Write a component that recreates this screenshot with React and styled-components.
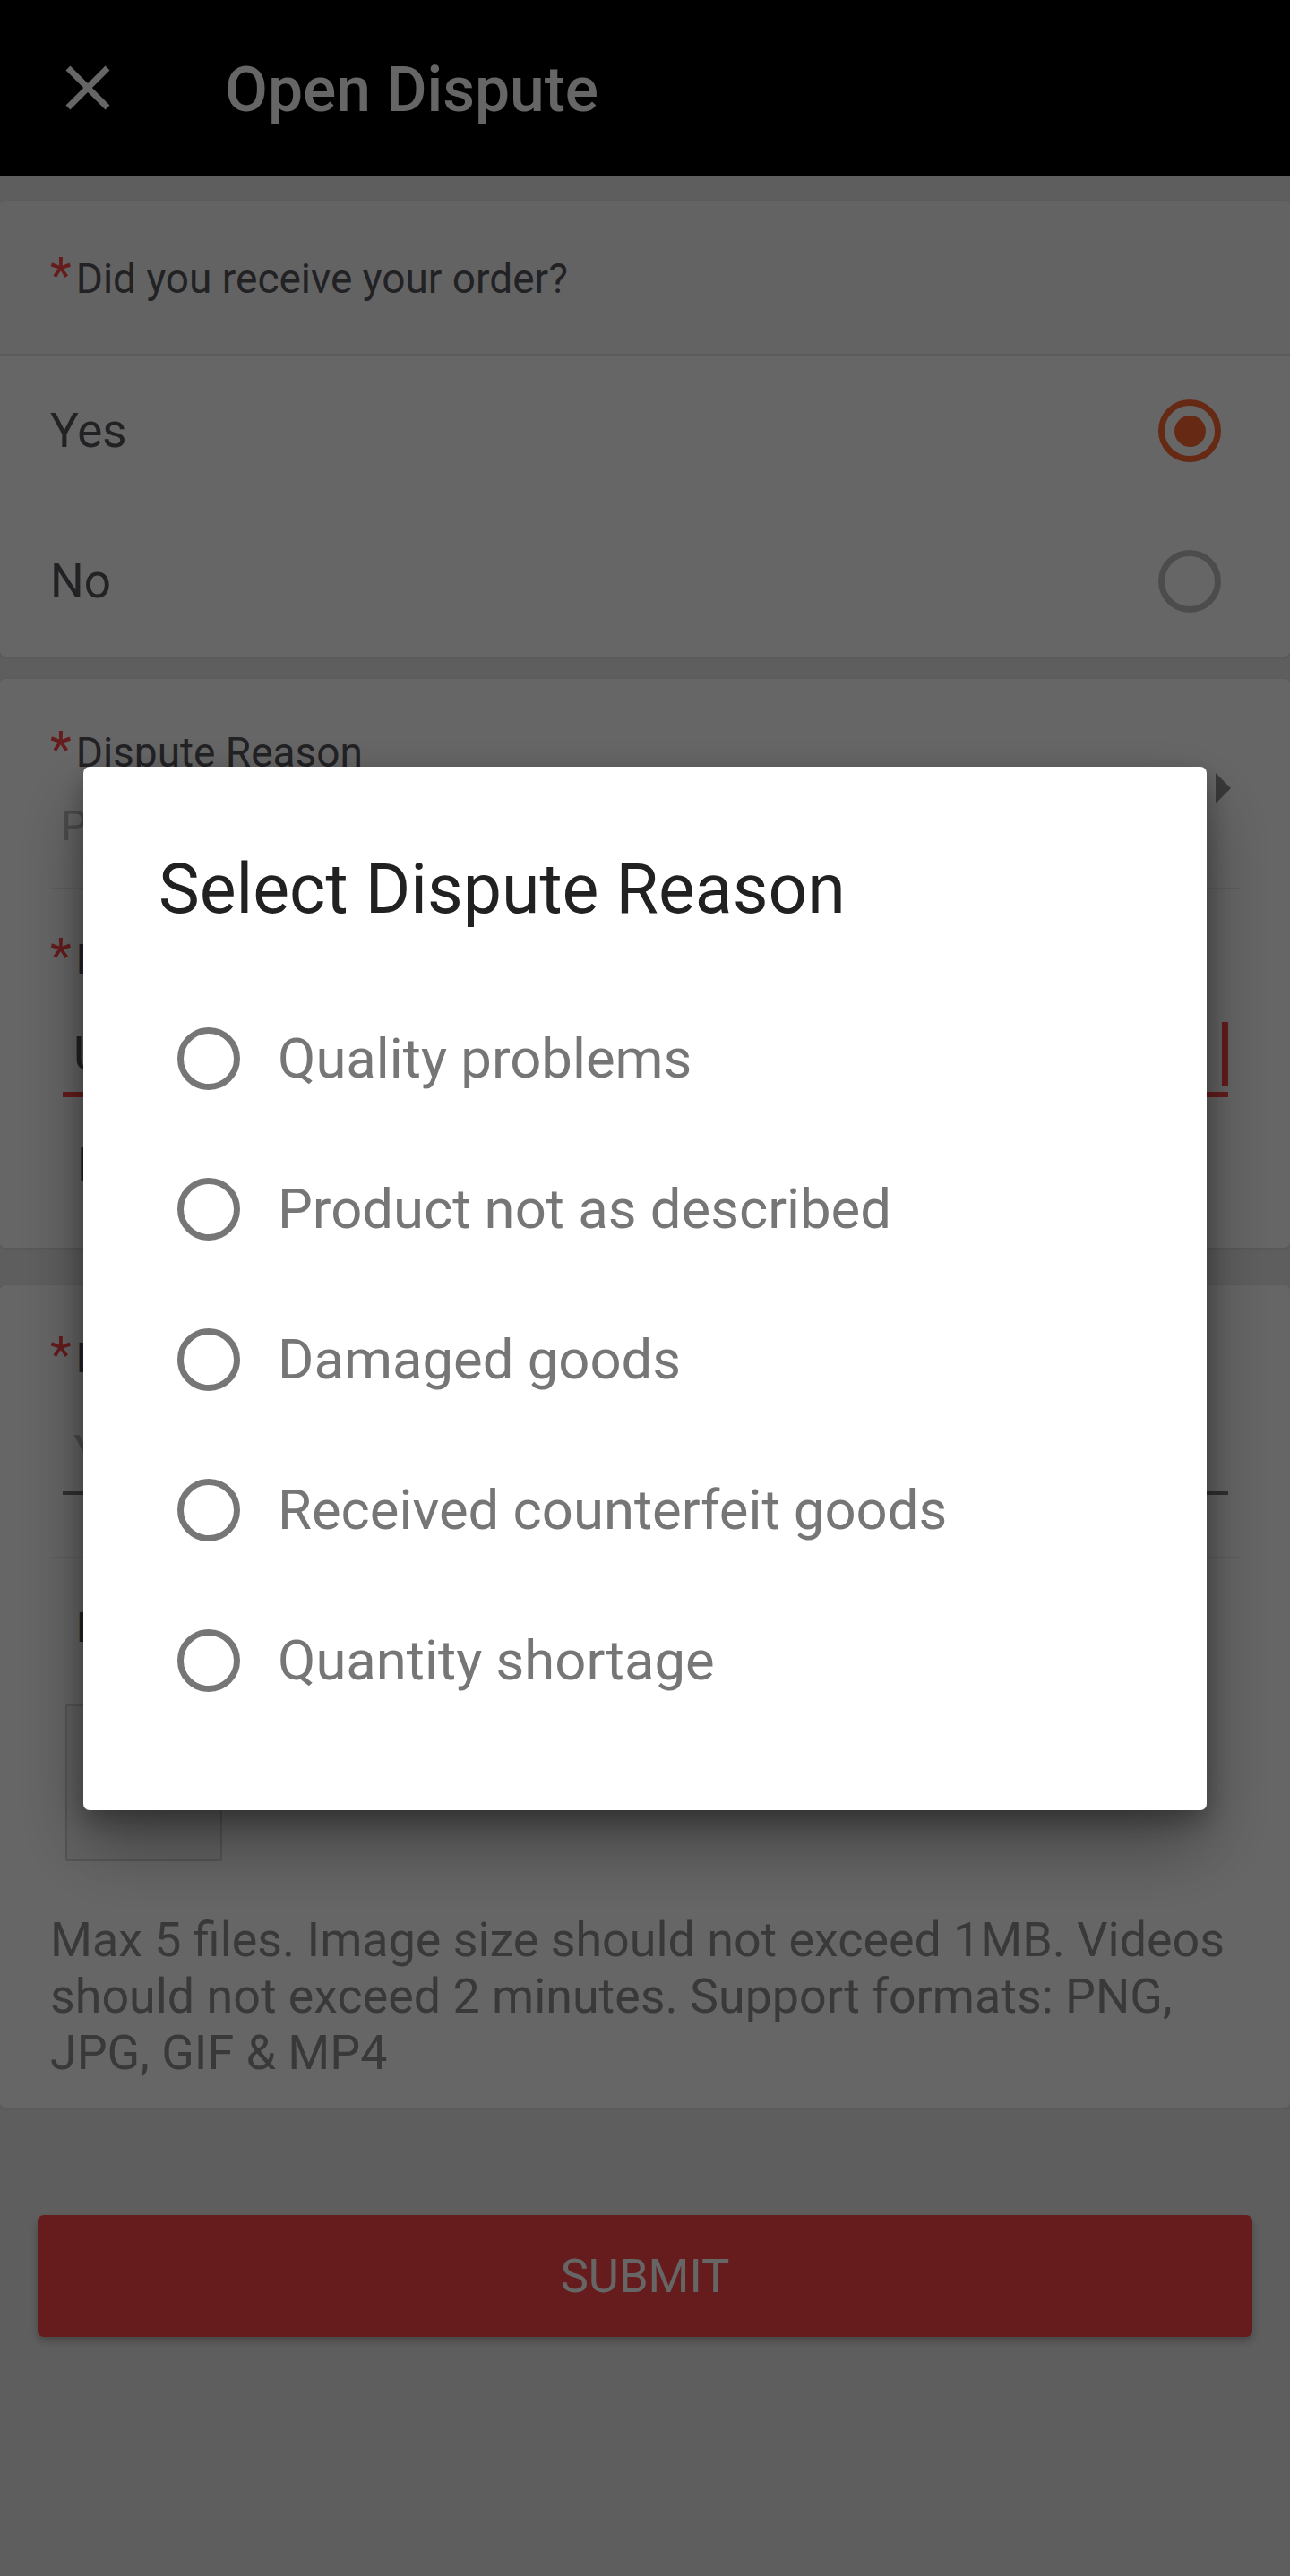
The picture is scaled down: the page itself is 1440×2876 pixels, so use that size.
import React from 'react';
import styled, { createGlobalStyle } from 'styled-components';

const GlobalStyle = createGlobalStyle`
  html, body { margin: 0; padding: 0; }
  body {
    background: #ececec;
    font-family: Roboto, "Noto Sans", "Liberation Sans", sans-serif;
  }
  * { box-sizing: border-box; }
`;

const Page = styled.div`
  min-height: 100vh;
  background: #ececec;
  font-family: Roboto, "Noto Sans", "Liberation Sans", sans-serif;
  padding-bottom: 200px;
`;

const Toolbar = styled.header`
  height: 196px;
  background: #000;
  display: flex;
  align-items: center;
  padding-left: 56px;
`;

const IconButton = styled.div`
  width: 84px;
  height: 84px;
  display: flex;
  align-items: center;
  justify-content: center;
  color: #fff;
`;

const ToolbarTitle = styled.h1`
  margin: 6px 0 0 111px;
  font-size: 69.5px;
  font-weight: 500;
  line-height: 1;
  color: #fff;
`;

const Content = styled.main`
  display: flex;
  flex-direction: column;
`;

const Card = styled.section`
  background: #fff;
  border-radius: 6px;
  box-shadow: 0 1px 4px rgba(0, 0, 0, 0.12);
  margin-top: ${(p) => p.$gap}px;
  padding-bottom: ${(p) => p.$pb || 0}px;
`;

const QuestionHeader = styled.div`
  height: 173px;
  display: flex;
  align-items: center;
  padding: 0 56px;
  background: #f8f8f8;
  border-bottom: 2px solid #e4e4e4;
  border-radius: 6px 6px 0 0;
`;

const Label = styled.div`
  font-size: 46px;
  line-height: 56px;
  color: #55555c;
  padding-left: ${(p) => (p.$required ? 0 : 29)}px;
  white-space: nowrap;
`;

const Asterisk = styled.span`
  color: #ff4747;
  font-size: 55px;
  margin-right: 5px;
`;

const ChoiceRow = styled.div`
  height: 168px;
  display: flex;
  align-items: center;
  justify-content: space-between;
  padding: 0 77px 0 56px;
  font-size: 53px;
  color: #55555c;
`;

const Radio = styled.span`
  width: 70px;
  height: 70px;
  border-radius: 50%;
  border: 7px solid ${(p) => (p.$checked ? '#ff6a33' : '#bdbdbd')};
  display: flex;
  align-items: center;
  justify-content: center;
  flex-shrink: 0;
  &::after {
    content: '';
    width: 35px;
    height: 35px;
    border-radius: 50%;
    background: #ff6a33;
    display: ${(p) => (p.$checked ? 'block' : 'none')};
  }
`;

const Field = styled.div`
  margin: 0 56px;
  padding-top: ${(p) => p.$pt}px;
  padding-bottom: ${(p) => p.$pb || 0}px;
  border-bottom: ${(p) => (p.$divider ? '2px solid #ebebeb' : 'none')};
`;

const SelectRow = styled.div`
  display: flex;
  align-items: center;
`;

const SelectBody = styled.div`
  flex: 1;
  display: flex;
  flex-direction: column;
`;

const SelectValue = styled.div`
  margin-top: 26px;
  padding-left: 12px;
  font-size: 46px;
  line-height: 56px;
  color: #bfbfbf;
`;

const ArrowIcon = styled.svg`
  width: 17px;
  height: 34px;
  margin-right: 10px;
  flex-shrink: 0;
`;

const InputRow = styled.div`
  margin: ${(p) => p.$mt}px 13px 0 14px;
  height: ${(p) => 78 + p.$line}px;
  padding-bottom: 6px;
  border-bottom: ${(p) => p.$line}px solid ${(p) => p.$color};
  display: flex;
  align-items: center;
`;

const InputText = styled.div`
  flex: 1;
  padding-left: 12px;
  font-size: ${(p) => p.$size}px;
  line-height: 72px;
  color: ${(p) => (p.$placeholder ? '#bfbfbf' : '#55555c')};
  white-space: nowrap;
  overflow: hidden;
`;

const Caret = styled.span`
  width: 7px;
  height: 72px;
  background: #ff4747;
  flex-shrink: 0;
`;

const NoteText = styled.div`
  margin-top: 44px;
  padding-left: 30px;
  font-size: 53px;
  line-height: 64px;
  color: #55555c;
`;

const UploadBox = styled.div`
  margin: 58px 0 0 17px;
  width: 175px;
  height: 175px;
  border: 2px solid #d6d6d6;
  background: #f6f6f6;
  border-radius: 2px;
  display: flex;
  align-items: center;
  justify-content: center;
  color: #c4c4c4;
`;

const HelpText = styled.p`
  margin: 56px 0 0;
  font-size: 53.8px;
  line-height: 63px;
  color: #8f8f8f;
`;

const SubmitButton = styled.button`
  margin: 120px 42px 0;
  height: 136px;
  border: none;
  border-radius: 7px;
  background: #ff4747;
  color: #fff;
  font-family: Roboto, "Noto Sans", sans-serif;
  font-size: 52.5px;
  text-transform: uppercase;
  box-shadow: 0 5px 10px rgba(0, 0, 0, 0.25);
`;

const Scrim = styled.div`
  position: fixed;
  inset: 0;
  background: rgba(0, 0, 0, 0.6);
  display: flex;
  align-items: center;
  justify-content: center;
  padding: 0 93px;
`;

const Dialog = styled.div`
  width: 100%;
  background: #fff;
  border-radius: 7px;
  padding: 92px 0 83px;
  box-shadow: 0 40px 80px rgba(0, 0, 0, 0.35), 0 12px 30px rgba(0, 0, 0, 0.3);
`;

const DialogTitle = styled.h2`
  margin: 0;
  padding: 0 84px;
  font-size: 77px;
  line-height: 90px;
  font-weight: 400;
  color: #212121;
`;

const ReasonList = styled.div`
  margin-top: 60px;
  display: flex;
  flex-direction: column;
`;

const ReasonRow = styled.div`
  height: 168px;
  display: flex;
  align-items: center;
  gap: 42px;
  padding-left: 105px;
`;

const ReasonRadio = styled.span`
  width: 70px;
  height: 70px;
  border-radius: 50%;
  border: 7px solid #767676;
  flex-shrink: 0;
`;

const ReasonText = styled.span`
  font-size: 61.6px;
  color: #767676;
  white-space: nowrap;
`;

const reasons = [
  'Quality problems',
  'Product not as described',
  'Damaged goods',
  'Received counterfeit goods',
  'Quantity shortage',
];

export default function App() {
  return (
    <>
      <GlobalStyle />
      <Page>
        <Toolbar>
          <IconButton>
            <svg width="84" height="84" viewBox="0 0 24 24" fill="currentColor">
              <path d="M19 6.41L17.59 5 12 10.59 6.41 5 5 6.41 10.59 12 5 17.59 6.41 19 12 13.41 17.59 19 19 17.59 13.41 12z" />
            </svg>
          </IconButton>
          <ToolbarTitle>Open Dispute</ToolbarTitle>
        </Toolbar>

        <Content>
          <Card $gap={28}>
            <QuestionHeader>
              <Label $required>
                <Asterisk>*</Asterisk>Did you receive your order?
              </Label>
            </QuestionHeader>
            <ChoiceRow>
              Yes
              <Radio $checked />
            </ChoiceRow>
            <ChoiceRow>
              No
              <Radio />
            </ChoiceRow>
          </Card>

          <Card $gap={25} $pb={60}>
            <Field $pt={51} $pb={41} $divider>
              <SelectRow>
                <SelectBody>
                  <Label $required>
                    <Asterisk>*</Asterisk>Dispute Reason
                  </Label>
                  <SelectValue>Please select</SelectValue>
                </SelectBody>
                <ArrowIcon viewBox="0 0 17 34">
                  <polygon points="0,0 17,17 0,34" fill="#909090" />
                </ArrowIcon>
              </SelectRow>
            </Field>
            <Field $pt={47}>
              <Label $required>
                <Asterisk>*</Asterisk>Refund Amount
              </Label>
              <InputRow $mt={42} $line={6} $color="#ff4747">
                <InputText $size={53}>US $</InputText>
                <Caret />
              </InputRow>
              <NoteText>Refund limit: US $12.99</NoteText>
            </Field>
          </Card>

          <Card $gap={42} $pb={30}>
            <Field $pt={50} $pb={69} $divider>
              <Label $required>
                <Asterisk>*</Asterisk>Description
              </Label>
              <InputRow $mt={43} $line={4} $color="#7a7a7a">
                <InputText $size={56} $placeholder>
                  Your detailed description
                </InputText>
              </InputRow>
            </Field>
            <Field $pt={49}>
              <Label>Photos / Videos</Label>
              <UploadBox>
                <svg width="70" height="70" viewBox="0 0 24 24" fill="currentColor">
                  <path d="M19 13h-6v6h-2v-6H5v-2h6V5h2v6h6v2z" />
                </svg>
              </UploadBox>
              <HelpText>
                Max 5 files. Image size should not exceed 1MB. Videos should not exceed 2
                minutes. Support formats: PNG, JPG, GIF &amp; MP4
              </HelpText>
            </Field>
          </Card>

          <SubmitButton>Submit</SubmitButton>
        </Content>

        <Scrim>
          <Dialog>
            <DialogTitle>Select Dispute Reason</DialogTitle>
            <ReasonList>
              {reasons.map((r) => (
                <ReasonRow key={r}>
                  <ReasonRadio />
                  <ReasonText>{r}</ReasonText>
                </ReasonRow>
              ))}
            </ReasonList>
          </Dialog>
        </Scrim>
      </Page>
    </>
  );
}
